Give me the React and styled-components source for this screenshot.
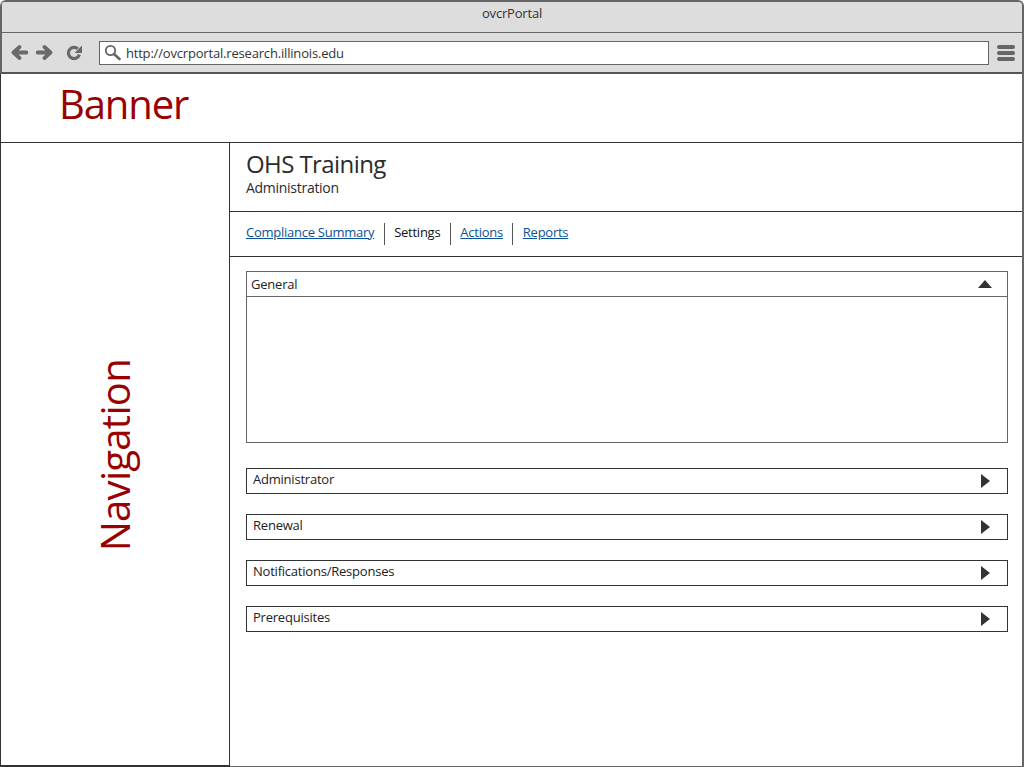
import React from "react";
import styled, { createGlobalStyle } from "styled-components";

const GlobalStyle = createGlobalStyle`
  html, body {
    margin: 0;
    padding: 0;
    background: #fff;
  }
  body {
    font-family: "Open Sans", "Noto Sans", sans-serif;
    color: #222;
  }
  * {
    box-sizing: border-box;
  }
`;

const Browser = styled.div`
  width: 1024px;
  height: 767px;
  display: flex;
  flex-direction: column;
  overflow: hidden;
  background: #fff;
  border-top: 2px solid #666;
  border-right: 2px solid #666;
  border-radius: 6px 6px 0 0;
`;

const TitleBar = styled.div`
  height: 31px;
  flex: none;
  display: flex;
  justify-content: center;
  padding-top: 3px;
  background: #dddddd;
  border-left: 2px solid #666;
  border-bottom: 1px solid #666;
  font-size: 13px;
  letter-spacing: -0.18px;
  line-height: 16px;
  color: #333;
`;

const Toolbar = styled.div`
  height: 41px;
  flex: none;
  display: flex;
  align-items: center;
  padding: 0 7px 0 8px;
  background: #dddddd;
  border-left: 2px solid #666;
  border-bottom: 2px solid #555;
`;

const NavIcons = styled.div`
  display: flex;
  align-items: center;
  gap: 8px;
  width: 89px;
  padding-left: 1px;
  color: #6a6a6a;
`;

const Reload = styled.svg`
  margin-left: 5px;
`;

const UrlBar = styled.div`
  width: 891px;
  height: 24px;
  display: flex;
  align-items: center;
  gap: 5px;
  padding-left: 4px;
  background: #fff;
  border: 1px solid #666;
  font-size: 13px;
  letter-spacing: -0.18px;
  color: #333;
`;

const UrlText = styled.span`
  padding-top: 1px;
`;

const Menu = styled.div`
  margin-left: 8px;
  width: 18px;
  display: flex;
  flex-direction: column;
  gap: 2px;
`;

const MenuBar = styled.span`
  display: block;
  height: 4px;
  border-radius: 2px;
  background: #666;
`;

const Banner = styled.header`
  height: 69px;
  flex: none;
  padding-left: 58px;
  border-bottom: 1px solid #333;
  border-left: 1px solid #333;
`;

const BannerText = styled.div`
  font-size: 40px;
  letter-spacing: -1.1px;
  line-height: 59px;
  color: #990000;
`;

const Body = styled.div`
  flex: 1;
  display: flex;
  min-height: 0;
`;

const Sidebar = styled.nav`
  width: 230px;
  flex: none;
  display: flex;
  align-items: center;
  justify-content: center;
  border-left: 1px solid #333;
  border-bottom: 2px solid #333;
  border-right: 1px solid #333;
`;

const SidebarText = styled.div`
  font-size: 40px;
  letter-spacing: -0.7px;
  line-height: 50px;
  color: #990000;
  writing-mode: vertical-rl;
  transform: rotate(180deg);
  margin-top: 3px;
`;

const Main = styled.main`
  flex: 1;
  display: flex;
  flex-direction: column;
  min-width: 0;
  border-bottom: 1px solid #666;
`;

const PageHead = styled.div`
  height: 69px;
  flex: none;
  padding: 4px 16px 0;
  border-bottom: 1px solid #333;
`;

const PageTitle = styled.h1`
  margin: 0;
  font-size: 24px;
  font-weight: 400;
  letter-spacing: -0.58px;
  line-height: 33px;
  color: #2b2b2b;
`;

const PageSub = styled.div`
  font-size: 14px;
  letter-spacing: -0.28px;
  line-height: 16px;
  color: #2b2b2b;
`;

const Tabs = styled.div`
  height: 45px;
  flex: none;
  display: flex;
  align-items: center;
  padding-left: 16px;
  border-bottom: 1px solid #333;
`;

const Tab = styled.a`
  height: 22px;
  display: flex;
  align-items: center;
  padding: 0 9.5px 4px;
  padding-left: ${(props) => (props.$first ? "0" : "9.5px")};
  font-size: 13px;
  letter-spacing: -0.26px;
  color: ${(props) => (props.$active ? "#111" : "#0b5394")};
  text-decoration: ${(props) => (props.$active ? "none" : "underline")};
  border-left: ${(props) => (props.$first ? "0" : "1px solid #555")};
`;

const Content = styled.div`
  flex: 1;
  padding: 14px 14px 0 16px;
`;

const OpenPanel = styled.section`
  height: 172px;
  display: flex;
  flex-direction: column;
  margin-bottom: 25px;
  border: 1px solid #666;
`;

const OpenHead = styled.div`
  height: 25px;
  flex: none;
  display: flex;
  align-items: center;
  justify-content: space-between;
  padding: 0 15px 0 4px;
  border-bottom: 1px solid #666;
  font-size: 13px;
  letter-spacing: -0.22px;
  color: #222;
`;

const Row = styled.div`
  height: 26px;
  display: flex;
  align-items: center;
  justify-content: space-between;
  padding: 0 17px 5px 6px;
  margin-bottom: 20px;
  border: 1px solid #333;
  font-size: 13px;
  letter-spacing: -0.22px;
  color: #222;
`;

const ArrowRight = styled.span`
  width: 0;
  height: 0;
  margin-top: 5px;
  border-top: 7px solid transparent;
  border-bottom: 7px solid transparent;
  border-left: 9px solid #333;
`;

const ArrowUp = styled.span`
  width: 0;
  height: 0;
  border-left: 7.5px solid transparent;
  border-right: 7.5px solid transparent;
  border-bottom: 8px solid #333;
`;

const ArrowIcon = ({ flip }) => (
  <svg
    width="17"
    height="17"
    viewBox="0 0 17 17"
    style={flip ? { transform: "scaleX(-1)" } : undefined}
  >
    <path
      d="M1.5 8.5h12M8.5 3l6 5.5L8.5 14"
      fill="none"
      stroke="currentColor"
      strokeWidth="3.8"
      strokeLinecap="round"
      strokeLinejoin="round"
    />
  </svg>
);

const rows = ["Administrator", "Renewal", "Notifications/Responses", "Prerequisites"];

const App = () => {
  return (
    <>
      <GlobalStyle />
      <Browser>
        <TitleBar>ovcrPortal</TitleBar>
        <Toolbar>
          <NavIcons>
            <ArrowIcon flip />
            <ArrowIcon />
            <Reload width="16" height="16" viewBox="0 0 16 16" fill="none">
              <path d="M13.4 9.5A5.6 5.6 0 1 1 11.8 3.8" stroke="currentColor" strokeWidth="3.2" />
              <path d="M16 .5v7.5H8.5z" fill="currentColor" />
            </Reload>
          </NavIcons>
          <UrlBar>
            <svg width="17" height="17" viewBox="0 0 17 17" fill="none">
              <circle cx="6.5" cy="6.5" r="4.7" stroke="#666" strokeWidth="1.8" />
              <path d="M10 10l5.5 5" stroke="#666" strokeWidth="2.6" strokeLinecap="round" />
            </svg>
            <UrlText>http://ovcrportal.research.illinois.edu</UrlText>
          </UrlBar>
          <Menu>
            <MenuBar />
            <MenuBar />
            <MenuBar />
          </Menu>
        </Toolbar>
        <Banner>
          <BannerText>Banner</BannerText>
        </Banner>
        <Body>
          <Sidebar>
            <SidebarText>Navigation</SidebarText>
          </Sidebar>
          <Main>
            <PageHead>
              <PageTitle>OHS Training</PageTitle>
              <PageSub>Administration</PageSub>
            </PageHead>
            <Tabs>
              <Tab $first href="#">Compliance Summary</Tab>
              <Tab $active>Settings</Tab>
              <Tab href="#">Actions</Tab>
              <Tab href="#">Reports</Tab>
            </Tabs>
            <Content>
              <OpenPanel>
                <OpenHead>
                  General
                  <ArrowUp />
                </OpenHead>
              </OpenPanel>
              {rows.map((row) => (
                <Row key={row}>
                  {row}
                  <ArrowRight />
                </Row>
              ))}
            </Content>
          </Main>
        </Body>
      </Browser>
    </>
  );
};

export default App;
